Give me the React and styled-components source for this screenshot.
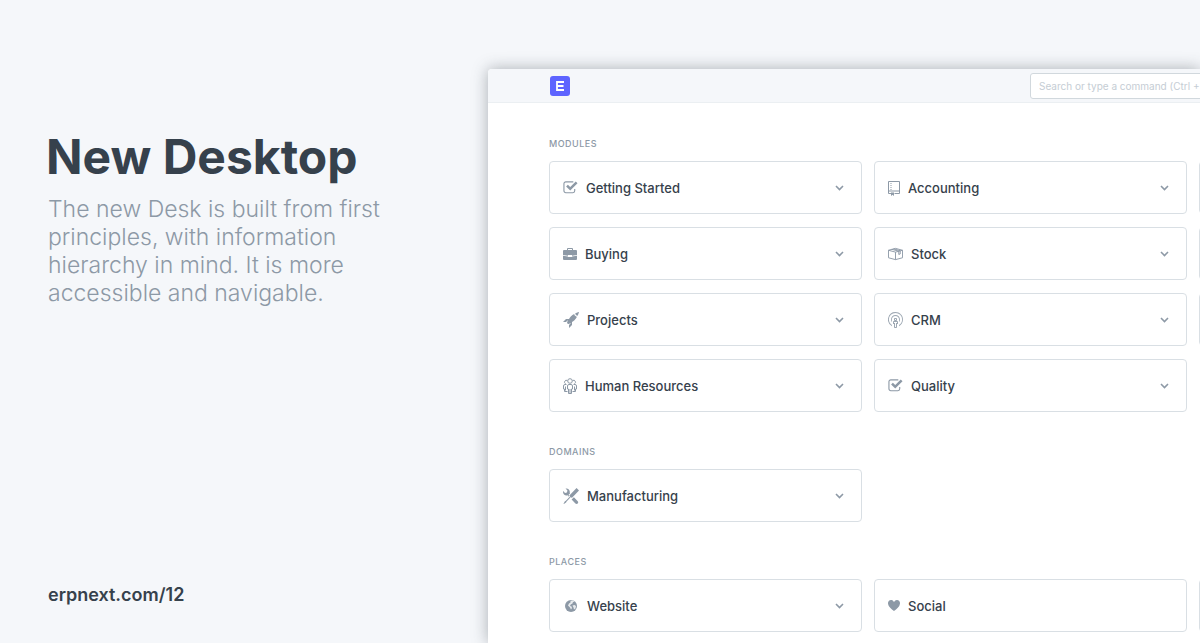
import React from "react";
import styled, { createGlobalStyle } from "styled-components";

const GlobalStyle = createGlobalStyle`
  * { box-sizing: border-box; }
  body {
    margin: 0;
    background: #f5f7fa;
    color: #36414c;
    font-family: Inter, "Liberation Sans", sans-serif;
  }
`;

const Page = styled.div`
  display: grid;
  grid-template-columns: minmax(0, 488fr) minmax(0, 712fr);
  grid-template-rows: 100vh;
  overflow: hidden;
`;

const Intro = styled.section`
  display: flex;
  flex-direction: column;
  justify-content: space-between;
  padding: 128px 48px 36px;
`;

const Title = styled.h1`
  margin: 0 0 9px -2px;
  font-size: 48px;
  line-height: 58px;
  font-weight: 700;
  white-space: nowrap;
`;

const Lead = styled.p`
  margin: 0;
  max-width: 344px;
  color: #8d99a6;
  font-size: 23px;
  line-height: 28px;
  font-weight: 300;
`;

const SiteLink = styled.a`
  align-self: flex-start;
  color: inherit;
  font-size: 18px;
  line-height: 24px;
  font-weight: 600;
  text-decoration: none;
`;

const Desk = styled.main`
  margin-top: 69px;
  background: #fff;
  border-top-left-radius: 4px;
  box-shadow: 0 0 16px rgba(54, 65, 76, 0.4);
`;

const Navbar = styled.header`
  display: flex;
  align-items: center;
  justify-content: space-between;
  height: 34px;
  padding-left: 62px;
  background: #f5f7fa;
  border-bottom: 1px solid #ebeff2;
  border-top-left-radius: 4px;
  overflow: hidden;
`;

const Logo = styled.svg`
  display: block;
  width: 20px;
  height: 20px;
`;

const Search = styled.input`
  flex: none;
  width: 240px;
  height: 26px;
  margin-right: -70px;
  padding: 0 8px;
  border: 1px solid #d1d8dd;
  border-radius: 3px;
  background: #fff;
  font-family: inherit;
  font-size: 10px;
  &::placeholder { color: #c5cdd4; opacity: 1; }
`;

const Content = styled.div`
  padding: 34px 0 0 61px;
  overflow: hidden;
`;

const Section = styled.section`
  margin-bottom: 33px;
`;

const SectionTitle = styled.h2`
  margin: 0 0 11px;
  color: #8d99a6;
  font-size: 9px;
  line-height: 13px;
  font-weight: 500;
  letter-spacing: 0.5px;
  text-transform: uppercase;
`;

const Cards = styled.div`
  display: grid;
  grid-template-columns: repeat(3, 313px);
  gap: 13px 12px;
`;

const Card = styled.button`
  display: flex;
  align-items: center;
  gap: 8px;
  height: 53px;
  padding: 0 17px 0 13px;
  border: 1px solid #d9dfe4;
  border-radius: 4px;
  background: #fff;
  color: #36414c;
  font-family: inherit;
  font-size: 13px;
  line-height: 20px;
  font-weight: 500;
  text-align: left;
`;

const EmptyCard = styled.div`
  height: 53px;
  border: 1px solid #d9dfe4;
  border-radius: 4px;
`;

const CardLabel = styled.span`
  flex: 1;
`;

const Glyph = styled.svg`
  flex: none;
  width: ${(p) => p.$width || 15}px;
  height: 16px;
  fill: #8d99a6;
`;

const Chevron = styled.svg`
  width: 9px;
  height: 6px;
  fill: none;
  stroke: #8d99a6;
  stroke-width: 1.6;
`;

const icons = {
  check: {
    box: "0 0 16 16",
    body: (
      <>
        <path d="M12.500 9v2a2 2 0 0 1-2 2H3a2 2 0 0 1-2-2V3.500a2 2 0 0 1 2-2h8" fill="none" stroke="#8d99a6" strokeWidth="1.200" />
        <path d="M3.300 6.300 5.200 4.500l2.500 2.500L13.600 1.100l1.900 1.800-7.800 7.800z" />
      </>
    ),
  },
  repo: {
    box: "0 0 12 16",
    width: 12,
    body: (
      <>
        <path d="M.5 1.500h11v12H6.500M3 13.500H.5v-12M.5 11h11" fill="none" stroke="#8d99a6" />
        <path d="M2.500 3h1v1h-1zM2.500 5h1v1h-1zM2.500 7h1v1h-1zM2.500 9h1v1h-1zM3 12.500h3V16l-1.500-1.200L3 16z" />
      </>
    ),
  },
  briefcase: {
    box: "0 0 14 16",
    width: 14,
    body: <path fillRule="evenodd" d="M4 4V3q0-1 1-1h4q1 0 1 1v1h3q1 0 1 1v4l-5 .8V9H5v.8L0 9V5q0-1 1-1zm1 0h4V3H5zM0 9.700l5 .8v.5h4v-.5l5-.8V13q0 1-1 1H1q-1 0-1-1z" />,
  },
  box: {
    box: "0 0 16 16",
    body: (
      <g fill="none" stroke="#8d99a6" strokeWidth="1">
        <path d="M.5 4 8 2l7.500 2v8L8 14 .5 12zM.5 4 8 6l7.500-2M8 6v8" />
        <path d="m4 3 7.500 2v3.500l1.500-.5V4.500L6 2.500" />
      </g>
    ),
  },
  rocket: {
    box: "0 0 16 16",
    width: 16,
    body: <path d="M12.170 3.830c-.27-.27-.47-.55-.63-.88-.16-.31-.27-.66-.34-1.020-.58.33-1.160.7-1.730 1.130-.58.44-1.140.94-1.690 1.480-.7.7-1.330 1.810-1.780 2.450H3L0 10h3l2-2c-.34.77-1.020 2.980-1 3l1 1c.02.02 2.230-.64 3-1l-2 2v3l3-3v-3c.64-.45 1.750-1.090 2.450-1.780.55-.55 1.050-1.130 1.470-1.700.44-.58.81-1.160 1.140-1.720-.36-.08-.7-.19-1.030-.34a3.390 3.390 0 0 1-.86-.63zM16 0s-.09.38-.3 1.060c-.2.7-.55 1.580-1.060 2.660-.7-.08-1.270-.33-1.660-.72-.39-.39-.63-.94-.7-1.640C13.360.84 14.230.48 14.920.28 15.620.08 16 0 16 0z" />,
  },
  broadcast: {
    box: "0 0 15 16",
    body: <path opacity=".85" d="M9 9H8c.55 0 1-.45 1-1V7c0-.55-.45-1-1-1H7c-.55 0-1 .45-1 1v1c0 .55.45 1 1 1H6c-.55 0-1 .45-1 1v2h1v3c0 .55.45 1 1 1h1c.55 0 1-.45 1-1v-3h1v-2c0-.55-.45-1-1-1zM7 7h1v1H7V7zm2 4H8v4H7v-4H6v-1h3v1zm2.090-3.500c0-1.980-1.610-3.590-3.590-3.590A3.593 3.593 0 0 0 4 8.310v1.980c-.61-.77-1-1.730-1-2.800 0-2.480 2.020-4.500 4.500-4.500S12 5.010 12 7.490c0 1.060-.39 2.030-1 2.800V8.310c.06-.27.09-.53.09-.81zm3.910 0c0 2.880-1.630 5.380-4 6.630v-1.050a6.553 6.553 0 0 0 3.090-5.580A6.590 6.590 0 0 0 7.500.91 6.590 6.590 0 0 0 .91 7.500c0 2.360 1.230 4.420 3.090 5.580v1.050A7.497 7.497 0 0 1 7.500 0C11.640 0 15 3.360 15 7.500z" />,
  },
  people: {
    box: "0 0 14 16",
    width: 14,
    body: (
      <g fill="none" stroke="#8d99a6" strokeWidth="1">
        <circle cx="7" cy="3" r="2.300" />
        <path d="M4.300 2.500a1.800 1.800 0 0 0-1.800 3.200M9.700 2.500a1.800 1.800 0 0 1 1.800 3.200" />
        <path d="M4.500 11V8q0-1.500 1.500-1.500h2q1.500 0 1.500 1.500v3H8.500v4.500h-3V11zM7 11v4M3.500 6.500H2Q.5 6.500.5 8v3h1v2.500h3M10.500 6.500H12q1.500 0 1.500 1.500v3h-1v2.500h-3M2.500 8.500v4M11.500 8.500v4" />
      </g>
    ),
  },
  tools: {
    box: "0 0 16 16",
    width: 16,
    body: <path d="M4.480 7.270c.26.26 1.280 1.330 1.280 1.330l.56-.58-.88-.91 1.690-1.800s-.76-.74-.43-.45c.32-1.190.03-2.510-.87-3.440C4.930.5 3.660.2 2.520.51l1.930 2-.51 1.960-1.890.52-1.930-1.990C-.19 4.170.1 5.480 1 6.400c.94.98 2.290 1.260 3.480.87zm6.440 1.940l-2.330 2.300 3.840 3.980c.31.33.73.49 1.140.49.41 0 .82-.16 1.140-.49.63-.65.63-1.700 0-2.350l-3.790-3.930zM16 2.530L13.550 0 6.330 7.460l.88.91-4.310 4.460-.99.53-1.390 2.270.35.37 2.200-1.440.51-1.020L7.900 9.080l.88.91L16 2.530z" />,
  },
  globe: {
    box: "0 0 16 16",
    width: 16,
    body: (
      <>
        <circle cx="8" cy="8" r="6" />
        <path fill="#fff" opacity=".8" d="M7.500 2.700 10 2.500l1.500 1.300-1.500.2-.5 1.500-1.800 1-.7 1.500 1.500.5.5 1.500-1 1.500-1-2-2-2L6 5.500l1.500-1zM9.500 7.500l2-.5 1.500 1-.5 2.500-1.500 1-.5-2z" />
      </>
    ),
  },
  heart: {
    box: "0 0 12 16",
    width: 12,
    body: <path d="M11.200 3c-.52-.63-1.250-.95-2.200-1-.97 0-1.690.42-2.200 1-.51.58-.78.920-.8 1-.02-.08-.28-.42-.8-1-.52-.58-1.170-1-2.200-1-.95.05-1.690.38-2.200 1-.52.61-.78 1.280-.8 2 0 .52.09 1.520.67 2.670C1.250 8.820 3.010 10.610 6 13c2.980-2.390 4.770-4.170 5.340-5.330C11.910 6.510 12 5.500 12 5c-.02-.72-.28-1.390-.8-2.020V3z" />,
  },
};

const sections = [
  {
    title: "Modules",
    items: [
      { label: "Getting Started", icon: "check" },
      { label: "Accounting", icon: "repo" },
      {},
      { label: "Buying", icon: "briefcase" },
      { label: "Stock", icon: "box" },
      {},
      { label: "Projects", icon: "rocket" },
      { label: "CRM", icon: "broadcast" },
      {},
      { label: "Human Resources", icon: "people" },
      { label: "Quality", icon: "check" },
    ],
  },
  { title: "Domains", items: [{ label: "Manufacturing", icon: "tools" }] },
  {
    title: "Places",
    items: [
      { label: "Website", icon: "globe" },
      { label: "Social", icon: "heart", plain: true },
      {},
    ],
  },
];

function ModuleCard({ label, icon, plain }) {
  if (!label) return <EmptyCard />;
  const glyph = icons[icon];
  return (
    <Card type="button">
      <Glyph viewBox={glyph.box} $width={glyph.width} aria-hidden="true">
        {glyph.body}
      </Glyph>
      <CardLabel>{label}</CardLabel>
      {!plain && (
        <Chevron viewBox="0 0 9 6" aria-hidden="true">
          <path d="m1 1 3.500 3.500L8 1" />
        </Chevron>
      )}
    </Card>
  );
}

export default function App() {
  return (
    <>
      <GlobalStyle />
      <Page>
        <Intro>
          <div>
            <Title>New Desktop</Title>
            <Lead>
              The new Desk is built from first principles, with information
              hierarchy in mind. It is more accessible and navigable.
            </Lead>
          </div>
          <SiteLink href="#">erpnext.com/12</SiteLink>
        </Intro>
        <Desk>
          <Navbar>
            <Logo viewBox="0 0 20 20" role="img" aria-label="Home">
              <rect width="20" height="20" rx="3" fill="#5e64ff" />
              <path d="M14 6H7v8h7M7 10h6.500" fill="none" stroke="#fff" strokeWidth="1.800" />
            </Logo>
            <Search aria-label="Search" placeholder="Search or type a command (Ctrl + G)" />
          </Navbar>
          <Content>
            {sections.map((section) => (
              <Section key={section.title}>
                <SectionTitle>{section.title}</SectionTitle>
                <Cards>
                  {section.items.map((item, index) => (
                    <ModuleCard key={index} {...item} />
                  ))}
                </Cards>
              </Section>
            ))}
          </Content>
        </Desk>
      </Page>
    </>
  );
}
